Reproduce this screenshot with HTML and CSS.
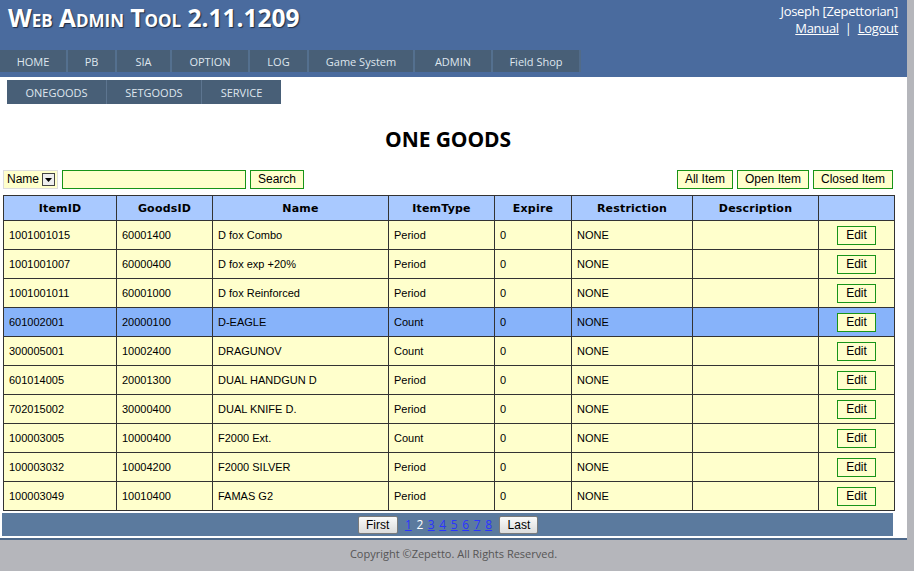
FILE: index.html
```html
<!DOCTYPE html>
<html>
<head>
<meta charset="utf-8">
<title>Web Admin Tool</title>
<link rel="stylesheet" href="styles.css">
</head>
<body>
<div class="page">
  <header class="header">
    <div class="header-top">
      <div class="brand">Web Admin Tool 2.11.1209</div>
      <div class="user">
        <div>Joseph [Zepettorian]</div>
        <div class="user-links"><a href="#">Manual</a><span class="sep">|</span><a href="#">Logout</a></div>
      </div>
    </div>
    <nav class="nav">
      <a class="nav-item w68" href="#">HOME</a>
      <a class="nav-item w49" href="#">PB</a>
      <a class="nav-item w55" href="#">SIA</a>
      <a class="nav-item w78" href="#">OPTION</a>
      <a class="nav-item w59" href="#">LOG</a>
      <a class="nav-item w106" href="#">Game System</a>
      <a class="nav-item w78" href="#">ADMIN</a>
      <a class="nav-item w88" href="#">Field Shop</a>
    </nav>
  </header>
  <nav class="subnav">
    <a class="sub-item s100" href="#">ONEGOODS</a>
    <a class="sub-item s95" href="#">SETGOODS</a>
    <a class="sub-item s79" href="#">SERVICE</a>
  </nav>
  <h1 class="title">ONE GOODS</h1>
  <div class="toolbar">
    <div class="search">
      <div class="select">Name <span class="select-btn"><svg width="9" height="9" viewBox="0 0 9 9"><path d="M1 3h7L4.5 7z" fill="#000"/></svg></span></div>
      <input class="search-input" type="text">
      <button class="btn">Search</button>
    </div>
    <div class="filters">
      <button class="btn">All Item</button>
      <button class="btn">Open Item</button>
      <button class="btn">Closed Item</button>
    </div>
  </div>
  <table class="grid">
    <colgroup>
      <col class="c1"><col class="c2"><col class="c3"><col class="c4"><col class="c5"><col class="c6"><col class="c7"><col class="c8">
    </colgroup>
    <thead>
      <tr><th>ItemID</th><th>GoodsID</th><th>Name</th><th>ItemType</th><th>Expire</th><th>Restriction</th><th>Description</th><th></th></tr>
    </thead>
    <tbody>
      <tr><td>1001001015</td><td>60001400</td><td>D fox Combo</td><td>Period</td><td>0</td><td>NONE</td><td></td><td class="act"><button class="btn edit">Edit</button></td></tr>
      <tr><td>1001001007</td><td>60000400</td><td>D fox exp +20%</td><td>Period</td><td>0</td><td>NONE</td><td></td><td class="act"><button class="btn edit">Edit</button></td></tr>
      <tr><td>1001001011</td><td>60001000</td><td>D fox Reinforced</td><td>Period</td><td>0</td><td>NONE</td><td></td><td class="act"><button class="btn edit">Edit</button></td></tr>
      <tr class="sel"><td>601002001</td><td>20000100</td><td>D-EAGLE</td><td>Count</td><td>0</td><td>NONE</td><td></td><td class="act"><button class="btn edit">Edit</button></td></tr>
      <tr><td>300005001</td><td>10002400</td><td>DRAGUNOV</td><td>Count</td><td>0</td><td>NONE</td><td></td><td class="act"><button class="btn edit">Edit</button></td></tr>
      <tr><td>601014005</td><td>20001300</td><td>DUAL HANDGUN D</td><td>Period</td><td>0</td><td>NONE</td><td></td><td class="act"><button class="btn edit">Edit</button></td></tr>
      <tr><td>702015002</td><td>30000400</td><td>DUAL KNIFE D.</td><td>Period</td><td>0</td><td>NONE</td><td></td><td class="act"><button class="btn edit">Edit</button></td></tr>
      <tr><td>100003005</td><td>10000400</td><td>F2000 Ext.</td><td>Count</td><td>0</td><td>NONE</td><td></td><td class="act"><button class="btn edit">Edit</button></td></tr>
      <tr><td>100003032</td><td>10004200</td><td>F2000 SILVER</td><td>Period</td><td>0</td><td>NONE</td><td></td><td class="act"><button class="btn edit">Edit</button></td></tr>
      <tr><td>100003049</td><td>10010400</td><td>FAMAS G2</td><td>Period</td><td>0</td><td>NONE</td><td></td><td class="act"><button class="btn edit">Edit</button></td></tr>
    </tbody>
  </table>
  <div class="pager">
    <button class="pbtn">First</button>
    <a class="pnum" href="#">1</a>
    <span class="pnum cur">2</span>
    <a class="pnum" href="#">3</a>
    <a class="pnum" href="#">4</a>
    <a class="pnum" href="#">5</a>
    <a class="pnum" href="#">6</a>
    <a class="pnum" href="#">7</a>
    <a class="pnum" href="#">8</a>
    <button class="pbtn">Last</button>
  </div>
</div>
<footer class="footer">Copyright ©Zepetto. All Rights Reserved.</footer>
</body>
</html>
```
FILE: styles.css
```css
html, body {
  margin: 0;
  padding: 0;
}
body {
  background: #b5b6bb;
  font-family: "Liberation Sans", Arial, sans-serif;
  width: 914px;
  overflow: hidden;
}
.page {
  width: 907px;
  background: #fff;
  padding-bottom: 2px;
  border-bottom: 2px solid #4d6889;
}
.header {
  background: #4a6b9e;
  height: 77px;
  display: flex;
  flex-direction: column;
}
.header-top {
  display: flex;
  justify-content: space-between;
  height: 50px;
}
.brand {
  font-family: "Open Sans", sans-serif;
  font-weight: 700;
  font-variant: small-caps;
  font-size: 24.5px;
  color: #fff;
  text-shadow: 1px 1px 1px #1d2c44;
  padding: 0 0 0 8px;
  line-height: 36px;
  letter-spacing: 0px;
}
.user {
  font-family: "Open Sans", sans-serif;
  font-size: 13px;
  color: #fff;
  text-align: right;
  padding: 3px 9px 0 0;
  line-height: 17px;
  letter-spacing: -0.3px;
}
.user-links a {
  color: #fff;
  text-decoration: underline;
}
.sep {
  margin: 0 6px;
}
.nav {
  display: flex;
  height: 22px;
}
.nav-item {
  background: #485f77;
  color: #dfe6ee;
  font-family: "Open Sans", sans-serif;
  font-size: 11px;
  text-decoration: none;
  text-align: center;
  line-height: 23px;
  box-sizing: border-box;
  border-right: 2px solid #54708f;
}
.w68 { width: 68px; }
.w49 { width: 49px; }
.w55 { width: 55px; }
.w78 { width: 78px; }
.w59 { width: 59px; }
.w106 { width: 106px; }
.w88 { width: 88px; border-right-color: #516b89; }
.subnav {
  display: flex;
  margin: 3px 0 0 7px;
  height: 24px;
}
.sub-item {
  background: #485f77;
  color: #dfe6ee;
  font-family: "Open Sans", sans-serif;
  font-size: 11px;
  text-decoration: none;
  text-align: center;
  line-height: 25px;
  box-sizing: border-box;
  border-right: 1px solid #5d7590;
}
.s100 { width: 100px; }
.s95 { width: 95px; }
.s79 { width: 79px; border-right: 0; }
.title {
  font-family: "Open Sans", sans-serif;
  font-size: 21px;
  font-weight: 700;
  text-align: center;
  margin: 20px 0 0 0;
  padding-right: 11px;
  line-height: 30px;
  color: #000;
  letter-spacing: -0.1px;
}
.toolbar {
  display: flex;
  justify-content: space-between;
  margin: 16px 14px 0 3px;
  height: 19px;
}
.search, .filters {
  display: flex;
  gap: 4px;
}
.select {
  background: #ffffcc;
  border: 1px solid #ddd;
  box-sizing: border-box;
  height: 19px;
  width: 55px;
  font-size: 12px;
  line-height: 17px;
  padding-left: 3px;
  display: flex;
  align-items: center;
  gap: 3px;
}
.select-btn {
  width: 13px;
  height: 13px;
  border: 1px solid #444;
  background: #eee;
  box-sizing: border-box;
  display: flex;
  align-items: center;
  justify-content: center;
}
.search-input {
  width: 184px;
  height: 19px;
  box-sizing: border-box;
  border: 1px solid #189418;
  background: #ffffcc;
  margin: 0;
  padding: 0;
}
.btn {
  font-family: "Liberation Sans", Arial, sans-serif;
  font-size: 12px;
  background: #ffffcc;
  border: 1px solid #189418;
  color: #000;
  height: 19px;
  box-sizing: border-box;
  padding: 0 7px;
  line-height: 17px;
  margin: 0;
}
.grid {
  margin: 6px 0 0 3px;
  width: 891px;
  border-collapse: collapse;
  font-size: 11px;
  table-layout: fixed;
}
.c1 { width: 113px; }
.c2 { width: 96px; }
.c3 { width: 176px; }
.c4 { width: 106px; }
.c5 { width: 77px; }
.c6 { width: 121px; }
.c7 { width: 126px; }
.c8 { width: 76px; }
.grid th {
  background: #a9c9ff;
  font-family: "DejaVu Sans", Verdana, sans-serif;
  font-size: 11px;
  font-weight: 700;
  height: 24px;
  border: 1px solid #333;
  padding: 0;
  letter-spacing: 0.2px;
}
.grid td {
  background: #ffffcc;
  border: 1px solid #333;
  height: 28px;
  padding: 0 0 0 5px;
  color: #000;
}
.grid tr.sel td {
  background: #87b3fa;
}
.grid td.act {
  text-align: center;
  padding: 0;
}
.btn.edit {
  width: 39px;
  padding: 0;
}
.pager {
  margin: 2px 0 0 2px;
  width: 891px;
  height: 23px;
  background: #5b7a9e;
  display: flex;
  align-items: center;
  justify-content: center;
  font-size: 12px;
  padding-left: 1px;
  box-sizing: border-box;
}
.pbtn {
  font-family: "Liberation Sans", Arial, sans-serif;
  font-size: 12px;
  height: 18px;
  padding: 0;
  background: linear-gradient(#fafafa, #dcdcdc);
  border: 1px solid #7a7a7a;
  border-radius: 2px;
  color: #000;
  line-height: 16px;
}
.pbtn:first-child { margin-right: 5px; width: 40px; }
.pbtn:last-child { margin-left: 5px; width: 39px; }
.pnum {
  color: #2b34ff;
  text-decoration: underline;
  margin: 0 2.3px;
  font-family: "Open Sans", sans-serif;
  font-size: 12px;
}
.pnum.cur {
  color: #fff;
  text-decoration: none;
}
.footer {
  width: 907px;
  text-align: center;
  font-family: "Open Sans", sans-serif;
  font-size: 11px;
  color: #555;
  padding-top: 6px;
  line-height: 15px;
  height: 26px;
}
```
